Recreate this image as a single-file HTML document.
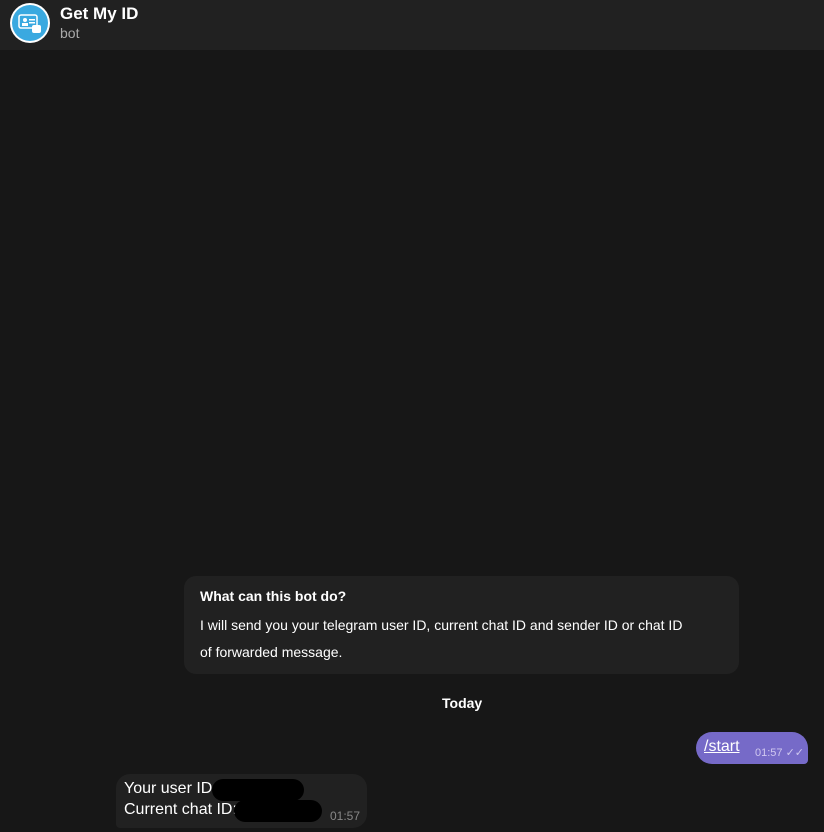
<!DOCTYPE html>
<html><head><meta charset="utf-8"><style>
*{margin:0;padding:0;box-sizing:border-box}
body{width:824px;height:832px;overflow:hidden;background:#171717;font-family:"Liberation Sans",sans-serif;position:relative}
.hdr{position:absolute;left:0;top:0;width:824px;height:50px;background:#212121}
.av{position:absolute;left:10px;top:3px;width:40px;height:40px;border-radius:50%;background:#fff}
.av i{position:absolute;left:2px;top:2px;width:36px;height:36px;border-radius:50%;background:#3aa9e0}
.t{position:absolute;left:60px;top:4px;color:#fff;font-size:17px;font-weight:bold}
.s{position:absolute;left:60px;top:25px;color:#aaa;font-size:14px}
.card{position:absolute;left:184px;top:576px;width:555px;height:98px;background:#212121;border-radius:12px;color:#fff}
.today{position:absolute;left:442px;top:695px;color:#fff;font-weight:bold;font-size:14px}
.out{position:absolute;left:696px;top:732px;width:112px;height:32px;background:#766ac8;border-radius:16px 16px 4px 16px;color:#fff;white-space:nowrap}
.in{position:absolute;left:116px;top:774px;width:251px;height:54px;background:#212121;border-radius:14px 14px 14px 4px;color:#fff;font-size:16px;white-space:nowrap}
.blk{position:absolute;background:#000;border-radius:12px}
</style></head><body>
<div class="hdr"><div class="av"><i></i><svg style="position:absolute;left:8px;top:9px" width="24" height="22" viewBox="0 0 24 22"><rect x="1" y="3" width="18" height="13" rx="2" fill="none" stroke="#fff" stroke-width="1.5"/><circle cx="7" cy="8" r="2" fill="#fff"/><rect x="4" y="11" width="6" height="3" fill="#fff"/><rect x="11" y="7" width="6" height="1.5" fill="#fff"/><rect x="11" y="10" width="6" height="1.5" fill="#fff"/><rect x="14" y="13" width="9" height="8" rx="2" fill="#fff"/></svg></div>
<div class="t">Get My ID</div><div class="s">bot</div></div>
<div class="card"><div style="position:absolute;left:16px;top:12px;font-size:14px;font-weight:bold">What can this bot do?</div>
<div style="position:absolute;left:16px;top:36px;width:530px;font-size:14px;line-height:27px">I will send you your telegram user ID, current chat ID and sender ID or chat ID<br>of forwarded message.</div></div>
<div class="today">Today</div>
<div class="out"><span style="position:absolute;left:8px;top:6px;font-size:16px;text-decoration:underline">/start</span><span style="position:absolute;left:59px;top:14px;font-size:11px;color:#d0c8f0">01:57 ✓✓</span></div>
<div class="in"><div style="position:absolute;left:8px;top:6px">Your user ID:</div><div style="position:absolute;left:8px;top:27px">Current chat ID:</div>
<div class="blk" style="left:96px;top:5px;width:92px;height:22px"></div><div class="blk" style="left:118px;top:26px;width:88px;height:22px"></div>
<span style="position:absolute;left:214px;top:35px;font-size:12px;color:#888">01:57</span></div>
</body></html>
